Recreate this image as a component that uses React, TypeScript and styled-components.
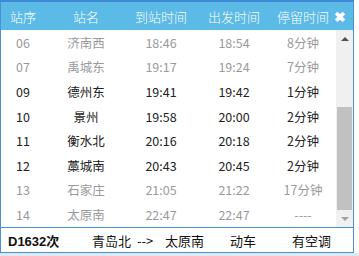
import styled, { createGlobalStyle } from 'styled-components';

const GlobalStyle = createGlobalStyle`
  html, body {
    margin: 0;
    padding: 0;
    background: #ffffff;
    font-family: "Noto Sans CJK SC", "Noto Sans", "Liberation Sans", sans-serif;
    overflow: hidden;
  }
`;

type Stop = {
  no: string;
  name: string;
  arrive: string;
  depart: string;
  stay: string;
  passed: boolean;
};

const stops: Stop[] = [
  { no: '06', name: '济南西', arrive: '18:46', depart: '18:54', stay: '8分钟', passed: true },
  { no: '07', name: '禹城东', arrive: '19:17', depart: '19:24', stay: '7分钟', passed: true },
  { no: '09', name: '德州东', arrive: '19:41', depart: '19:42', stay: '1分钟', passed: false },
  { no: '10', name: '景州', arrive: '19:58', depart: '20:00', stay: '2分钟', passed: false },
  { no: '11', name: '衡水北', arrive: '20:16', depart: '20:18', stay: '2分钟', passed: false },
  { no: '12', name: '藁城南', arrive: '20:43', depart: '20:45', stay: '2分钟', passed: false },
  { no: '13', name: '石家庄', arrive: '21:05', depart: '21:22', stay: '17分钟', passed: true },
  { no: '14', name: '太原南', arrive: '22:47', depart: '22:47', stay: '----', passed: true },
];

const Page = styled.div`
  width: 359px;
  height: 256px;
  display: flex;
  flex-direction: column;
  background: #ffffff;
`;

const Panel = styled.div`
  width: 352px;
  border: 1px solid #4a8fd8;
  border-top: 2px solid #3e8ad6;
  background: #ffffff;
  display: flex;
  flex-direction: column;
`;

const Header = styled.div`
  height: 28px;
  background: #5cbae6;
  display: grid;
  grid-template-columns: 44px 82px 68px 78px 60px 1fr;
  align-items: center;
  color: #ffffff;
  font-size: 13px;
  font-weight: 300;
`;

const HeadCell = styled.div`
  text-align: center;
`;

const Close = styled.div`
  font-size: 14px;
  font-weight: bold;
  text-align: center;
  line-height: 1;
  padding-right: 6px;
`;

const Body = styled.div`
  display: flex;
  height: 197px;
`;

const Rows = styled.div`
  flex: 1;
  display: flex;
  flex-direction: column;
`;

const Row = styled.div<{ $passed: boolean }>`
  height: 24.6px;
  display: grid;
  grid-template-columns: 44px 82px 68px 78px 60px;
  align-items: center;
  font-size: 12.5px;
  color: ${(p) => (p.$passed ? '#9a9a9a' : '#222222')};
`;

const Cell = styled.div`
  text-align: center;
`;

const Scrollbar = styled.div`
  width: 17px;
  background: #f0f0f0;
  display: flex;
  flex-direction: column;
  align-items: center;
`;

const Arrow = styled.div<{ $down?: boolean }>`
  height: 17px;
  width: 17px;
  display: flex;
  align-items: center;
  justify-content: center;
  &::after {
    content: '';
    border-left: 4px solid transparent;
    border-right: 4px solid transparent;
    ${(p) =>
      p.$down
        ? 'border-top: 4px solid #a3a3a3;'
        : 'border-bottom: 4px solid #505050;'}
  }
`;

const Track = styled.div`
  flex: 1;
  width: 100%;
  display: flex;
  flex-direction: column;
  justify-content: flex-end;
`;

const Thumb = styled.div`
  height: 103px;
  margin: 0 1px;
  background: #c1c1c1;
`;

const Footer = styled.div`
  height: 24px;
  border-top: 1px solid #4a8fd8;
  display: flex;
  align-items: center;
  font-size: 13px;
  color: #111111;
`;

const Train = styled.span`
  font-weight: bold;
  margin-left: 7px;
  width: 84px;
  font-family: "Liberation Sans", "Noto Sans CJK SC", sans-serif;
`;

const Item = styled.span<{ $w: number }>`
  width: ${(p) => p.$w}px;
`;

const Below = styled.div`
  flex: 1;
  background: #dfe9f5;
`;

export default function App() {
  return (
    <Page>
      <GlobalStyle />
      <Panel>
        <Header>
          <HeadCell>站序</HeadCell>
          <HeadCell>站名</HeadCell>
          <HeadCell>到站时间</HeadCell>
          <HeadCell>出发时间</HeadCell>
          <HeadCell>停留时间</HeadCell>
          <Close>✖</Close>
        </Header>
        <Body>
          <Rows>
            {stops.map((s) => (
              <Row key={s.no} $passed={s.passed}>
                <Cell>{s.no}</Cell>
                <Cell>{s.name}</Cell>
                <Cell>{s.arrive}</Cell>
                <Cell>{s.depart}</Cell>
                <Cell>{s.stay}</Cell>
              </Row>
            ))}
          </Rows>
          <Scrollbar>
            <Arrow />
            <Track>
              <Thumb />
            </Track>
            <Arrow $down />
          </Scrollbar>
        </Body>
        <Footer>
          <Train>D1632次</Train>
          <Item $w={45}>青岛北</Item>
          <Item $w={28}>--&gt;</Item>
          <Item $w={65}>太原南</Item>
          <Item $w={62}>动车</Item>
          <Item $w={50}>有空调</Item>
        </Footer>
      </Panel>
      <Below />
    </Page>
  );
}
